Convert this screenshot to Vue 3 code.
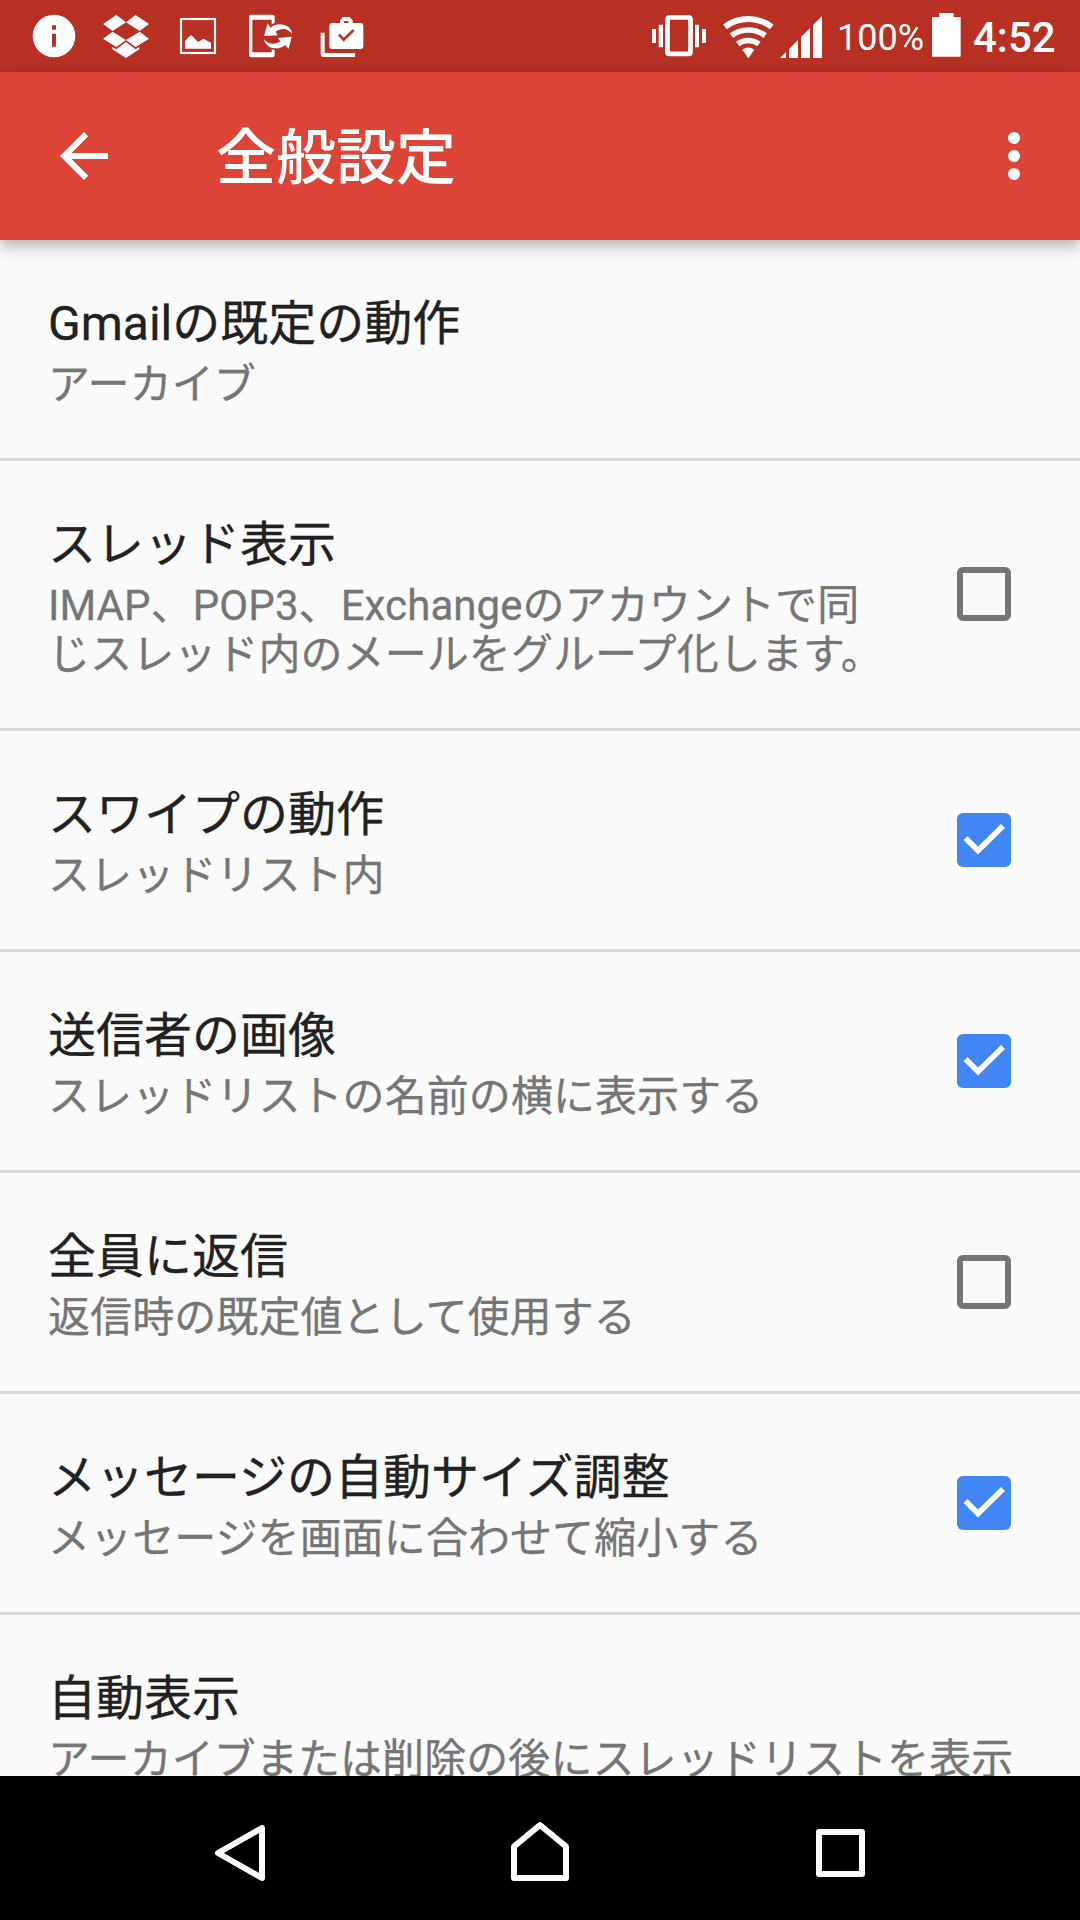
<script setup>
const settings = [
  { title: 'Gmailの既定の動作', summary: 'アーカイブ' },
  {
    title: 'スレッド表示',
    summary: 'IMAP、POP3、Exchangeのアカウントで同\nじスレッド内のメールをグループ化します。',
    checked: false,
  },
  { title: 'スワイプの動作', summary: 'スレッドリスト内', checked: true },
  { title: '送信者の画像', summary: 'スレッドリストの名前の横に表示する', checked: true },
  { title: '全員に返信', summary: '返信時の既定値として使用する', checked: false },
  { title: 'メッセージの自動サイズ調整', summary: 'メッセージを画面に合わせて縮小する', checked: true },
  { title: '自動表示', summary: 'アーカイブまたは削除の後にスレッドリストを表示' },
]
</script>

<template>
  <div class="screen" lang="ja">
    <div class="status">
      <svg class="s-info" viewBox="96 0 132 216" width="44" height="72">
        <path fill-rule="evenodd" fill="#fff" d="M162 44a64 64 0 1 0 0 128a64 64 0 1 0 0-128zM156 76h12v13h-12zM156 101h12v39h-12z" />
      </svg>
      <svg class="s-dropbox" viewBox="306 0 144 216" width="48" height="72" fill="#fff">
        <path d="M349 45l29 22-40 26-29-21zM407 45l40 27-28 21-41-26zM338 95l40 25-29 21-40-25zM419 95l28 21-40 25-29-21z" />
        <path d="M378 126l29 22 11-7v7l-40 26-41-26v-7l12 7z" />
      </svg>
      <svg class="s-image" viewBox="537 0 114 216" width="38" height="72">
        <rect x="543" y="57" width="102" height="102" fill="none" stroke="#fff" stroke-width="6.5" />
        <path d="M555 146v-23l14-15q4-5 8 0l17 18 14-8q4-2 8 1l17 9v18z" fill="#fff" />
      </svg>
      <svg class="s-sync" viewBox="744 0 138 216" width="46" height="72" fill="#fff">
        <path d="M753 44h65q6 0 6 6v19l-9 4V59h-58v98h58v-9l9 3v15q0 6-6 6h-65q-6 0-6-6V50q0-6 6-6z" />
        <path d="M803 70l9 13c24-20 63-8 64 19c-12-19-34-18-49-7l6 11l-41 2z" />
        <path d="M866 147l-10-12c-24 20-62 8-64-18c13 18 34 17 49 7l-7-10l41-4z" />
      </svg>
      <svg class="s-bag" viewBox="960 0 132 216" width="44" height="72">
        <path d="M962 98h12v61h91v12h-93q-10 0-10-10z" fill="#fff" />
        <path fill-rule="evenodd" fill="#fff" d="M1020 69v-8l9-10h20l9 10v8h23q9 0 9 9v60q0 9-9 9h-84q-9 0-9-9V78q0-9 9-9zM1032 63v6h13v-6z" />
        <path d="M1017 104l14 15 30-29" fill="none" stroke="#b83023" stroke-width="8" />
      </svg>
      <div class="spacer"></div>
      <svg viewBox="66 0 162 216" width="54" height="72" fill="#fff">
        <path d="M66 87h12v42H66zM86 74h13v68H86zM195 74h12v68h-12zM216 87h12v42h-12z" />
        <rect x="112.500" y="52.500" width="69" height="109" rx="5" fill="none" stroke="#fff" stroke-width="14" />
      </svg>
      <svg class="s-wifi" viewBox="279 0 153 216" width="51" height="72">
        <g fill="none" stroke="#fff">
          <path d="M284.600 80.600a117 117 0 0 1 140.800 0" stroke-width="18" />
          <path d="M304.400 106.900a84 84 0 0 1 101.200 0" stroke-width="17" />
          <path d="M323.300 132a53 53 0 0 1 63.400 0" stroke-width="17" />
        </g>
        <path d="M355 175l-18-26q18-13 36 0z" fill="#fff" />
      </svg>
      <svg class="s-signal" viewBox="450 0 126 216" width="42" height="72">
        <path d="M450 174l18-18v18zM477 147l27-27v54h-27zM513 111l27-27v90h-27zM549 75l27-27v126h-27z" fill="#fff" />
      </svg>
      <span class="percent">100%</span>
      <svg viewBox="906 0 87 216" width="29" height="72">
        <path d="M906 51h22V39h43v12h21v119h-86z" fill="#fff" />
      </svg>
      <span class="clock">4:52</span>
    </div>

    <header class="appbar">
      <svg viewBox="0 0 24 24" width="72" height="72" fill="#fff">
        <path d="M20 11H7.830l5.590-5.590L12 4l-8 8 8 8 1.410-1.410L7.830 13H20z" />
      </svg>
      <h1>全般設定</h1>
      <svg viewBox="0 0 24 24" width="72" height="72" fill="#fff">
        <circle cx="12" cy="6" r="2" />
        <circle cx="12" cy="12" r="2" />
        <circle cx="12" cy="18" r="2" />
      </svg>
    </header>

    <main class="list">
      <div v-for="item in settings" :key="item.title" class="row">
        <div class="texts">
          <div class="title">{{ item.title }}</div>
          <div class="summary">{{ item.summary }}</div>
        </div>
        <svg v-if="item.checked === true" class="box" viewBox="0 0 54 54" width="54" height="54">
          <rect width="54" height="54" rx="6" fill="#4285f4" />
          <path d="M8.500 25l12.500 12.500L46 13" fill="none" stroke="#fff" stroke-width="5.600" />
        </svg>
        <svg v-else-if="item.checked === false" class="box" viewBox="0 0 54 54" width="54" height="54">
          <rect x="3" y="3" width="48" height="48" rx="3" fill="none" stroke="#757575" stroke-width="6" />
        </svg>
      </div>
    </main>

    <nav class="navbar">
      <svg viewBox="0 0 64 64" width="64" height="64">
        <path d="M10 33L54 8v50z" />
      </svg>
      <svg viewBox="0 0 64 64" width="64" height="64">
        <path d="M6 26.500L32 5l26 21.500V58H6z" />
      </svg>
      <svg viewBox="0 0 64 64" width="64" height="64">
        <path d="M11 12h43v42H11z" />
      </svg>
    </nav>
  </div>
</template>

<style>
body {
  margin: 0;
  background: #000;
}
</style>

<style scoped>
.screen {
  width: 1080px;
  height: 1920px;
  display: flex;
  flex-direction: column;
  overflow: hidden;
  background: #fafafa;
  font-family: Roboto, "Noto Sans CJK JP", sans-serif;
}
svg {
  display: block;
  flex: none;
}
.status {
  flex: none;
  height: 72px;
  box-sizing: border-box;
  padding-left: 32px;
  display: flex;
  background: #b83023;
  color: #fff;
}
.s-dropbox { margin-left: 26px; }
.s-image { margin-left: 29px; }
.s-sync { margin-left: 31px; }
.s-bag { margin-left: 26px; }
.s-wifi { margin-left: 17px; }
.s-signal { margin-left: 6px; }
.spacer { flex: 1; }
.percent {
  flex: none;
  width: 95px;
  padding-left: 15px;
  font-size: 36px;
  line-height: 76px;
}
.clock {
  flex: none;
  width: 107px;
  padding-left: 12px;
  font-size: 42px;
  font-weight: 500;
  line-height: 76px;
}
.appbar {
  flex: none;
  height: 168px;
  box-sizing: border-box;
  padding: 0 30px 0 48px;
  display: flex;
  align-items: center;
  background: #db4437;
  box-shadow: 0 6px 14px rgba(0, 0, 0, 0.29);
  z-index: 1;
}
h1 {
  flex: 1;
  margin: 6px 0 0 96px;
  color: #fff;
  font-size: 60px;
  font-weight: 500;
  line-height: 70px;
}
.list {
  flex: 1;
  min-height: 0;
  overflow: hidden;
}
.row {
  display: flex;
  align-items: center;
  justify-content: space-between;
  box-sizing: border-box;
  padding: 0 69px 0 48px;
  border-bottom: 3px solid #dadada;
}
.row:last-child {
  padding-right: 0;
}
.box {
  margin-bottom: 1px;
}
.texts {
  padding: 56px 0 49px;
  white-space: pre;
}
.title {
  margin-bottom: 8px;
  color: #212121;
  font-size: 48px;
  line-height: 56px;
  -webkit-text-stroke: 0.3px #212121;
}
.summary {
  color: #757575;
  font-size: 42px;
  line-height: 49px;
  letter-spacing: 0.08px;
  -webkit-text-stroke: 0.3px #757575;
}
.navbar {
  flex: none;
  height: 144px;
  box-sizing: border-box;
  padding-top: 44px;
  display: flex;
  justify-content: center;
  align-items: flex-start;
  gap: 236px;
  background: #000;
}
.navbar path {
  fill: none;
  stroke: #fff;
  stroke-width: 6;
  stroke-linejoin: round;
}
</style>
